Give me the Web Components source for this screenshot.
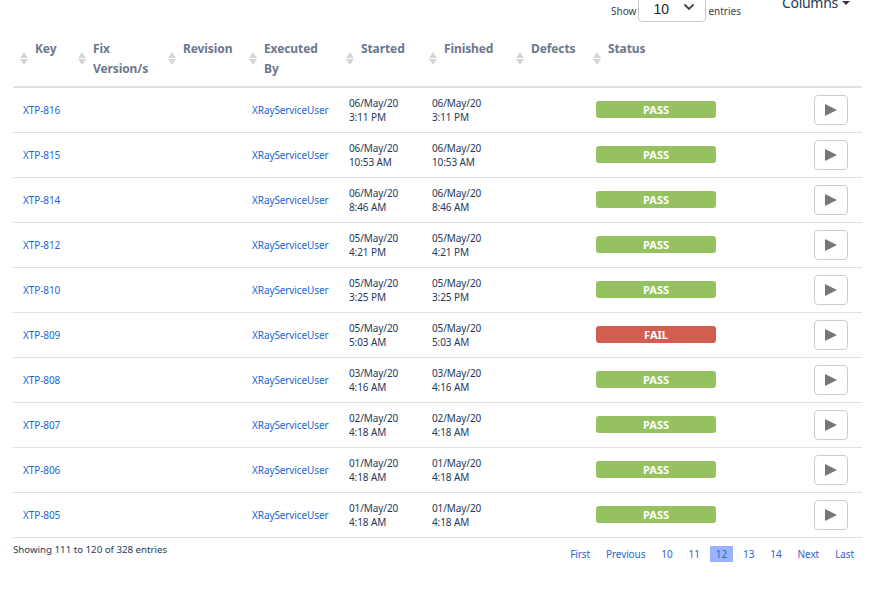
<!DOCTYPE html>
<html>
<head>
<meta charset="utf-8">
<title>Test executions</title>
<style>
    html, body { margin: 0; height: 591px; overflow: hidden; background: #fff; }
    body { font-family: "Noto Sans", sans-serif; color: #3b4252; }
</style>
</head>
<body>
<exec-page>
    <table-toolbar slot="toolbar"></table-toolbar>
    <exec-table slot="table">
        <exec-row issue="XTP-816" started="06/May/20" time="3:11 PM" status="PASS"></exec-row>
        <exec-row issue="XTP-815" started="06/May/20" time="10:53 AM" status="PASS"></exec-row>
        <exec-row issue="XTP-814" started="06/May/20" time="8:46 AM" status="PASS"></exec-row>
        <exec-row issue="XTP-812" started="05/May/20" time="4:21 PM" status="PASS"></exec-row>
        <exec-row issue="XTP-810" started="05/May/20" time="3:25 PM" status="PASS"></exec-row>
        <exec-row issue="XTP-809" started="05/May/20" time="5:03 AM" status="FAIL"></exec-row>
        <exec-row issue="XTP-808" started="03/May/20" time="4:16 AM" status="PASS"></exec-row>
        <exec-row issue="XTP-807" started="02/May/20" time="4:18 AM" status="PASS"></exec-row>
        <exec-row issue="XTP-806" started="01/May/20" time="4:18 AM" status="PASS"></exec-row>
        <exec-row issue="XTP-805" started="01/May/20" time="4:18 AM" status="PASS"></exec-row>
    </exec-table>
    <table-footer slot="footer"></table-footer>
</exec-page>

<script>
const COLUMNS = '58px 90px 81px 97px 83px 87px 77px 140px 136px';

class ExecPage extends HTMLElement {
    connectedCallback()
    {
        this.attachShadow({mode: 'open'});
        this.shadowRoot.innerHTML = `
            <style>
                :host { display: block; width: 849px; margin: 0 0 0 13px; }
            </style>
            <slot name="toolbar"></slot>
            <slot name="table"></slot>
            <slot name="footer"></slot>
        `;
    }
}

class TableToolbar extends HTMLElement {
    connectedCallback()
    {
        this.attachShadow({mode: 'open'});
        this.shadowRoot.innerHTML = `
            <style>
                :host { display: flex; align-items: flex-start; height: 22px; font-size: 10px; color: #3b4252; }
                .length { display: flex; align-items: center; margin-left: 598px; gap: 2px; }
                .select { display: flex; align-items: center; box-sizing: border-box; width: 68px; height: 32px; margin-top: -10px; padding: 5px 0 0 14px; border: 1px solid #c9c9cf; border-radius: 4px; font: 14px "Liberation Sans", sans-serif; color: #1f2430; }
                .select svg { margin: -4px 0 0 14px; }
                .length span { margin-top: -1px; }
                .columns { display: flex; align-items: center; gap: 4px; margin: -7px 0 0 41px; font-size: 14px; letter-spacing: -.3px; line-height: 20px; color: #253858; }
                .caret { width: 0; height: 0; border: 4px solid transparent; border-top-color: #253858; border-bottom-width: 0; }
            </style>
            <div class="length">
                <span>Show</span>
                <div class="select">10
                    <svg width="12" height="8" viewBox="0 0 12 8"><path d="M1.5 1.5 6 6l4.5-4.5" fill="none" stroke="#3b4252" stroke-width="1.8"/></svg>
                </div>
                <span>entries</span>
            </div>
            <div class="columns">Columns <i class="caret"></i></div>
        `;
    }
}

class SortHeader extends HTMLElement {
    connectedCallback()
    {
        this.attachShadow({mode: 'open'});
        this.shadowRoot.innerHTML = `
            <style>
                :host { display: flex; align-items: flex-start; gap: 7px; padding: 0 10px 0 7px; font-size: 12px; letter-spacing: -.1px; font-weight: 700; line-height: 20px; color: #6b778c; }
                .sort { flex: none; display: flex; flex-direction: column; gap: 1px; margin-top: 13px; }
                .sort i { display: block; width: 0; height: 0; border: 4.5px solid transparent; border-top-width: 0; border-bottom: 6.5px solid #d6d6d6; }
                .sort i + i { border-bottom-width: 0; border-top: 6.5px solid #d6d6d6; }
            </style>
            <span class="sort"><i></i><i></i></span>
            <span><slot></slot></span>
        `;
    }
}

class ExecTable extends HTMLElement {
    connectedCallback()
    {
        this.attachShadow({mode: 'open'});
        this.shadowRoot.innerHTML = `
            <style>
                :host { display: block; margin-top: 17px; }
                .head { display: grid; grid-template-columns: ${COLUMNS}; height: 47px; border-bottom: 2px solid #dfe1e6; }
            </style>
            <div class="head">
                <sort-header>Key</sort-header>
                <sort-header>Fix Version/s</sort-header>
                <sort-header>Revision</sort-header>
                <sort-header>Executed By</sort-header>
                <sort-header>Started</sort-header>
                <sort-header>Finished</sort-header>
                <sort-header>Defects</sort-header>
                <sort-header>Status</sort-header>
            </div>
            <slot></slot>
        `;
    }
}

class ExecRow extends HTMLElement {
    connectedCallback()
    {
        const status = this.getAttribute('status');
        const when = `${this.getAttribute('started')}<br>${this.getAttribute('time')}`;

        this.attachShadow({mode: 'open'});
        this.shadowRoot.innerHTML = `
            <style>
                :host { display: grid; grid-template-columns: ${COLUMNS}; align-items: center; height: 44px; border-bottom: 1px solid #dfe1e6; font-size: 10px; letter-spacing: -.1px; line-height: 14px; color: #253858; }
                .cell { padding-left: 10px; }
                a { color: #1a66d6; text-decoration: none; }
                .badge { display: block; width: 120px; height: 17px; margin-bottom: 1px; border-radius: 3px; background: #95c160; color: #fff; font-size: 11px; letter-spacing: 0; font-weight: 700; line-height: 17px; text-align: center; }
                .badge.fail { background: #d45d52; }
                .run { display: flex; justify-content: center; align-items: center; box-sizing: border-box; width: 34px; height: 30px; margin-left: 88px; padding: 0; border: 1px solid #ccc; border-radius: 4px; background: #fff; }
            </style>
            <div class="cell"><a href="#">${this.getAttribute('issue')}</a></div>
            <div></div>
            <div></div>
            <div class="cell"><a href="#">XRayServiceUser</a></div>
            <div class="cell">${when}</div>
            <div class="cell">${when}</div>
            <div></div>
            <div class="cell"><span class="badge ${status === 'FAIL' ? 'fail' : ''}">${status}</span></div>
            <div><button class="run"><svg width="12" height="12" viewBox="0 0 12 12"><path d="M0 0 12 6 0 12z" fill="#777"/></svg></button></div>
        `;
    }
}

class TableFooter extends HTMLElement {
    connectedCallback()
    {
        const pages = ['First', 'Previous', '10', '11', '12', '13', '14', 'Next', 'Last'];

        this.attachShadow({mode: 'open'});
        this.shadowRoot.innerHTML = `
            <style>
                :host { display: flex; justify-content: space-between; align-items: flex-start; font-size: 9.7px; color: #253858; }
                .info { margin-top: 5px; line-height: 14px; }
                nav { display: flex; margin-top: 8px; font-size: 10px; letter-spacing: -.1px; }
                a { display: block; height: 16px; margin: 0 2px; padding: 0 6px; line-height: 16px; color: #2f5fd0; text-decoration: none; }
                a.current { background: #99b3ff; }
            </style>
            <div class="info">Showing 111 to 120 of 328 entries</div>
            <nav>${pages.map(p => `<a href="#" class="${p === '12' ? 'current' : ''}">${p}</a>`).join('')}</nav>
        `;
    }
}

customElements.define('exec-page', ExecPage);
customElements.define('table-toolbar', TableToolbar);
customElements.define('sort-header', SortHeader);
customElements.define('exec-table', ExecTable);
customElements.define('exec-row', ExecRow);
customElements.define('table-footer', TableFooter);
</script>
</body>
</html>
